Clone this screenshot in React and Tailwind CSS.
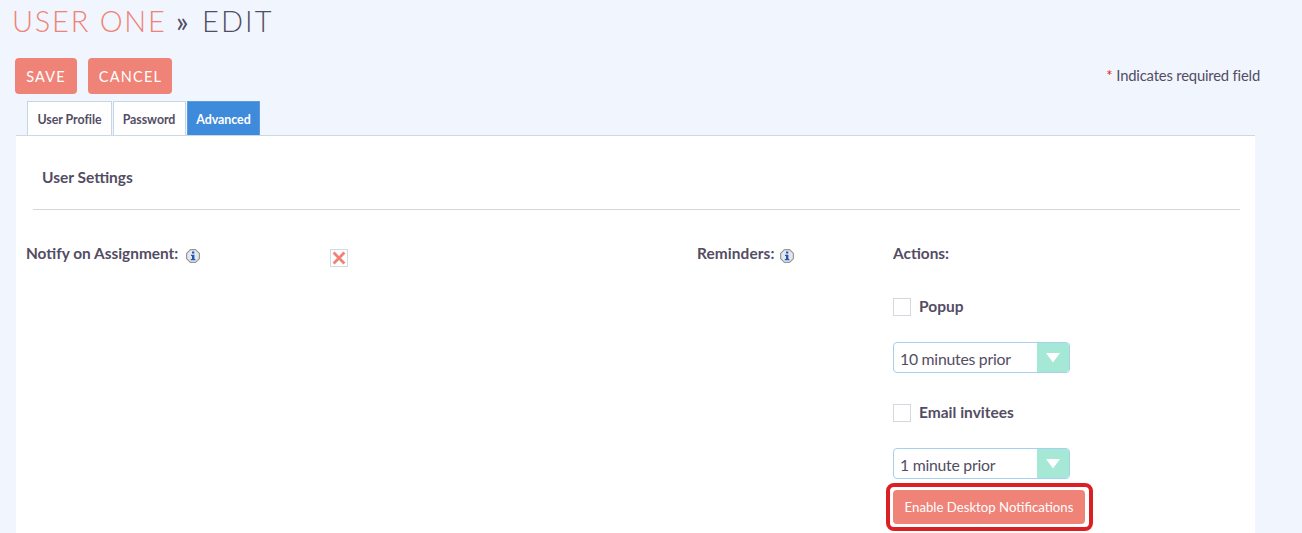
import React from "react";

function InfoIcon() {
  return (
    <svg width="14" height="14" viewBox="0 0 14 14" className="block shrink-0">
      <path d="M4.4 .6h5.2L13.4 4.4v5.2L9.6 13.4H4.4L.6 9.6V4.4z" fill="#e3e7ee" stroke="#98989a" strokeWidth="1.2" strokeLinejoin="round" />
      <path d="M6 2.6h2.3v1.8H6zM5 5.7h3.4v4.4h1v1.2H4.8v-1.2H6V6.9H5z" fill="#2456b0" />
    </svg>
  );
}

function Tab({ label, className }) {
  return (
    <div className={`flex h-[34px] items-center justify-center border border-b-0 pt-[3px] text-[12.4px] font-bold tracking-[-0.05px] whitespace-nowrap ${className}`}>
      {label}
    </div>
  );
}

function CheckRow({ label }) {
  return (
    <div className="flex h-[18px] items-center gap-[8px]">
      <span className="h-[18px] w-[18px] border border-[#d5d8de] bg-white" />
      <span className="-mt-[3px] text-[15.5px] font-bold leading-[18px]">{label}</span>
    </div>
  );
}

function Select({ label }) {
  return (
    <div className="flex h-[31px] w-[177px] overflow-hidden rounded-[4px] border border-[#a5d0f2] bg-white">
      <span className="flex w-[143px] items-center pt-[2px] pl-[6px] text-[15.8px] tracking-[-0.25px]">{label}</span>
      <span className="flex flex-1 items-center justify-center bg-[#a5e8d6]">
        <svg width="14" height="10" viewBox="0 0 14 10">
          <path d="M0 0h14L7 9.5z" fill="#fff" />
        </svg>
      </span>
    </div>
  );
}

export default function App() {
  return (
    <div className="h-[533px] w-[1302px] overflow-hidden bg-[#f1f6fe] font-['Lato',sans-serif] text-[#534d64]">
      <h1 className="flex h-[58px] items-start pt-[3px] pl-[12px] text-[29px] font-light leading-[36px] tracking-[1.75px]">
        <span className="w-[164px] text-[#f08377]">USER ONE</span>
        <span className="w-[26px] font-normal">»</span>
        <span className="tracking-[2.1px]">EDIT</span>
      </h1>
      <div className="flex h-[43px] items-start pr-[42px] pl-[15px]">
        <button className="h-[36px] w-[62px] rounded-[4px] bg-[#f08377] pt-[2px] text-[14.5px] tracking-[1.2px] text-white">SAVE</button>
        <button className="ml-[11px] h-[36px] w-[84px] rounded-[4px] bg-[#f08377] pt-[2px] pl-[1px] text-[14.5px] tracking-[1.2px] text-white">CANCEL</button>
        <p className="ml-auto pt-[7px] text-[14.8px] leading-[20px] tracking-[-0.18px]">
          <span className="mr-[4px] text-[#e22]">*</span>Indicates required field
        </p>
      </div>
      <div className="flex pl-[27px]">
        <Tab label="User Profile" className="w-[85px] border-[#c6d6e2] bg-white" />
        <Tab label="Password" className="ml-[1px] w-[73px] border-[#c6d6e2] bg-white pr-[1px]" />
        <Tab label="Advanced" className="ml-[1px] w-[73px] border-[#5d9bdd] bg-[#3f8bdb] text-white" />
      </div>
      <main className="mr-[47px] ml-[16px] h-[398px] border-t border-[#cbd9e4] bg-white">
        <div className="mr-[15px] ml-[17px] h-[74px] border-b border-[#d4d7db] pt-[31px] pl-[9px]">
          <h2 className="text-[15.5px] font-bold leading-[20px]">User Settings</h2>
        </div>
        <div className="flex pt-[33px] pl-[10px] text-[15.4px] font-bold">
          <div className="flex w-[304px] justify-start">
            <span className="w-[160px] leading-[20px] whitespace-nowrap">Notify on Assignment:</span>
            <span className="pt-[6px]"><InfoIcon /></span>
          </div>
          <div className="w-[367px] pt-[6px]">
            <div className="flex h-[18px] w-[18px] items-center justify-center border border-[#cfdbe2] bg-white">
              <svg width="14" height="14" viewBox="0 0 14 14">
                <path d="M1.6 1.6l10.8 10.8M12.4 1.6L1.6 12.4" stroke="#f08377" strokeWidth="2.8" />
              </svg>
            </div>
          </div>
          <div className="flex w-[196px]">
            <span className="w-[83px] leading-[20px] tracking-[0.1px]">Reminders:</span>
            <span className="pt-[6px]"><InfoIcon /></span>
          </div>
          <div className="pt-px">
            <p className="-mt-px h-[55px] leading-[20px]">Actions:</p>
            <CheckRow label="Popup" />
            <div className="mt-[26px] mb-[31px] font-normal"><Select label="10 minutes prior" /></div>
            <CheckRow label="Email invitees" />
            <div className="mt-[26px] font-normal"><Select label="1 minute prior" /></div>
            <div className="mt-[4px] -ml-[7px] h-[48px] w-[207px] rounded-[8px] border-4 border-[#dc1f22] p-[3px]">
              <button className="block h-[34px] w-[192px] rounded-[4px] bg-[#f08377] pt-[1px] text-[13.2px] font-normal text-white">Enable Desktop Notifications</button>
            </div>
          </div>
        </div>
      </main>
    </div>
  );
}
